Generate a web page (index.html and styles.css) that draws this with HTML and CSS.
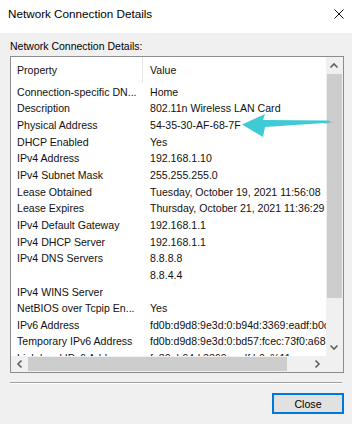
FILE: index.html
```html
<!DOCTYPE html>
<html>
<head>
<meta charset="utf-8">
<link rel="stylesheet" href="styles.css">
</head>
<body>
<div class="window">
  <div class="titlebar">
    <span class="title">Network Connection Details</span>
    <svg class="close-x" width="10" height="10" viewBox="0 0 10 10"><path d="M0.5 0.5 L9.5 9.5 M9.5 0.5 L0.5 9.5" stroke="#111" stroke-width="1" fill="none"/></svg>
  </div>
  <div class="body">
    <div class="label">Network Connection Details:</div>
    <div class="listbox">
      <div class="list">
        <div class="header">
          <div class="k">Property</div>
          <div class="v">Value</div>
        </div>
        <div class="row"><div class="k">Connection-specific DN...</div><div class="v">Home</div></div>
        <div class="row"><div class="k">Description</div><div class="v">802.11n Wireless LAN Card</div></div>
        <div class="row"><div class="k">Physical Address</div><div class="v">54-35-30-AF-68-7F</div></div>
        <div class="row"><div class="k">DHCP Enabled</div><div class="v">Yes</div></div>
        <div class="row"><div class="k">IPv4 Address</div><div class="v">192.168.1.10</div></div>
        <div class="row"><div class="k">IPv4 Subnet Mask</div><div class="v">255.255.255.0</div></div>
        <div class="row"><div class="k">Lease Obtained</div><div class="v">Tuesday, October 19, 2021 11:56:08</div></div>
        <div class="row"><div class="k">Lease Expires</div><div class="v">Thursday, October 21, 2021 11:36:29</div></div>
        <div class="row"><div class="k">IPv4 Default Gateway</div><div class="v">192.168.1.1</div></div>
        <div class="row"><div class="k">IPv4 DHCP Server</div><div class="v">192.168.1.1</div></div>
        <div class="row"><div class="k">IPv4 DNS Servers</div><div class="v">8.8.8.8</div></div>
        <div class="row"><div class="k"></div><div class="v">8.8.4.4</div></div>
        <div class="row"><div class="k">IPv4 WINS Server</div><div class="v"></div></div>
        <div class="row"><div class="k">NetBIOS over Tcpip En...</div><div class="v">Yes</div></div>
        <div class="row"><div class="k">IPv6 Address</div><div class="v">fd0b:d9d8:9e3d:0:b94d:3369:eadf:b0c</div></div>
        <div class="row"><div class="k">Temporary IPv6 Address</div><div class="v">fd0b:d9d8:9e3d:0:bd57:fcec:73f0:a68</div></div>
        <div class="row"><div class="k">Link-local IPv6 Address</div><div class="v">fe80::b94d:3369:eadf:b0c%11</div></div>
      </div>
      <div class="vscroll">
        <svg class="arr" width="16" height="17" viewBox="0 0 16 17"><path d="M4.5 10.5 L8 7 L11.5 10.5" stroke="#606060" stroke-width="1.6" fill="none"/></svg>
        <div class="vtrack"><div class="vthumb"></div></div>
        <svg class="arr" width="16" height="17" viewBox="0 0 16 17"><path d="M4.5 6.5 L8 10 L11.5 6.5" stroke="#606060" stroke-width="1.6" fill="none"/></svg>
      </div>
      <div class="hscroll">
        <svg class="arr" width="17" height="16" viewBox="0 0 17 16"><path d="M10.5 4.5 L7 8 L10.5 11.5" stroke="#606060" stroke-width="1.6" fill="none"/></svg>
        <div class="htrack"><div class="hthumb"></div></div>
        <svg class="arr" width="17" height="16" viewBox="0 0 17 16"><path d="M6.5 4.5 L10 8 L6.5 11.5" stroke="#606060" stroke-width="1.6" fill="none"/></svg>
      </div>
      <div class="corner"></div>
    </div>
    <div class="separator"></div>
    <div class="buttons">
      <button class="btn">Close</button>
    </div>
  </div>
  <svg class="pointer" width="100" height="32" viewBox="0 0 100 32">
    <path d="M86 11.6 L96 12.4 L86 14 Z" fill="#9aa6a8" opacity="0.6"/>
    <path d="M4 14.5 L27 4 L25 10 L90 10.6 L93 11.6 L90 12.8 L27 17 L25 27 Z" fill="#3fcad4"/>
  </svg>
</div>
</body>
</html>
```

FILE: styles.css
```css
html, body {
  margin: 0;
  padding: 0;
}
body {
  width: 352px;
  height: 424px;
  overflow: hidden;
  font-family: "Liberation Sans", Arial, sans-serif;
}
.window {
  position: relative;
  width: 352px;
  height: 424px;
  background: #f0f0f0;
  display: flex;
  flex-direction: column;
}
.titlebar {
  height: 33px;
  background: #ffffff;
  display: flex;
  align-items: center;
  padding: 0 8px 6px 8px;
  box-sizing: border-box;
}
.title {
  font-size: 11.7px;
  color: #000;
  flex: 1;
}
.close-x {
  margin-top: 1px;
}
.body {
  padding: 6px 8px 0 10px;
  display: flex;
  flex-direction: column;
}
.label {
  font-size: 10.5px;
  line-height: 14px;
  height: 14px;
  color: #000;
  margin-bottom: 3px;
}
.listbox {
  width: 334px;
  height: 317px;
  box-sizing: border-box;
  border: 1px solid #8c8c8c;
  background: #fff;
  display: grid;
  grid-template-columns: 315px 17px;
  grid-template-rows: 299px 16px;
}
.list {
  overflow: hidden;
  font-size: 10.6px;
  color: #111;
}
.header {
  height: 26.3px;
  display: flex;
  align-items: center;
}
.header .k {
  border-right: 1px solid #e5e5e5;
  align-self: stretch;
  display: flex;
  align-items: center;
  width: 125px;
}
.row {
  height: 16.67px;
  display: flex;
  align-items: center;
}
.k {
  width: 126px;
  flex: none;
  padding-left: 6px;
  white-space: nowrap;
  overflow: hidden;
}
.v {
  padding-left: 7px;
  white-space: nowrap;
}
.vscroll {
  background: #f0f0f0;
  display: flex;
  flex-direction: column;
}
.vtrack {
  flex: 1;
  display: flex;
  flex-direction: column;
  padding: 0 1px;
}
.vthumb {
  height: 224px;
  background: #cdcdcd;
}
.hscroll {
  background: #f0f0f0;
  display: flex;
  flex-direction: row;
}
.htrack {
  flex: 1;
  display: flex;
  padding: 1px 0;
}
.hthumb {
  width: 259px;
  background: #cdcdcd;
}
.arr {
  flex: none;
  display: block;
}
.corner {
  background: #f0f0f0;
}
.separator {
  margin-top: 9px;
  width: 332px;
  height: 0;
  border-top: 1px solid #a0a0a0;
  border-bottom: 1px solid #ffffff;
}
.buttons {
  display: flex;
  justify-content: flex-end;
  width: 334px;
  margin-top: 9px;
}
.btn {
  width: 72px;
  height: 21px;
  box-sizing: border-box;
  border: 2px solid #0078d7;
  background: #e1e1e1;
  font-family: "Liberation Sans", Arial, sans-serif;
  font-size: 10.6px;
  color: #000;
  padding: 0;
}
.pointer {
  position: absolute;
  left: 238px;
  top: 110px;
}
```
